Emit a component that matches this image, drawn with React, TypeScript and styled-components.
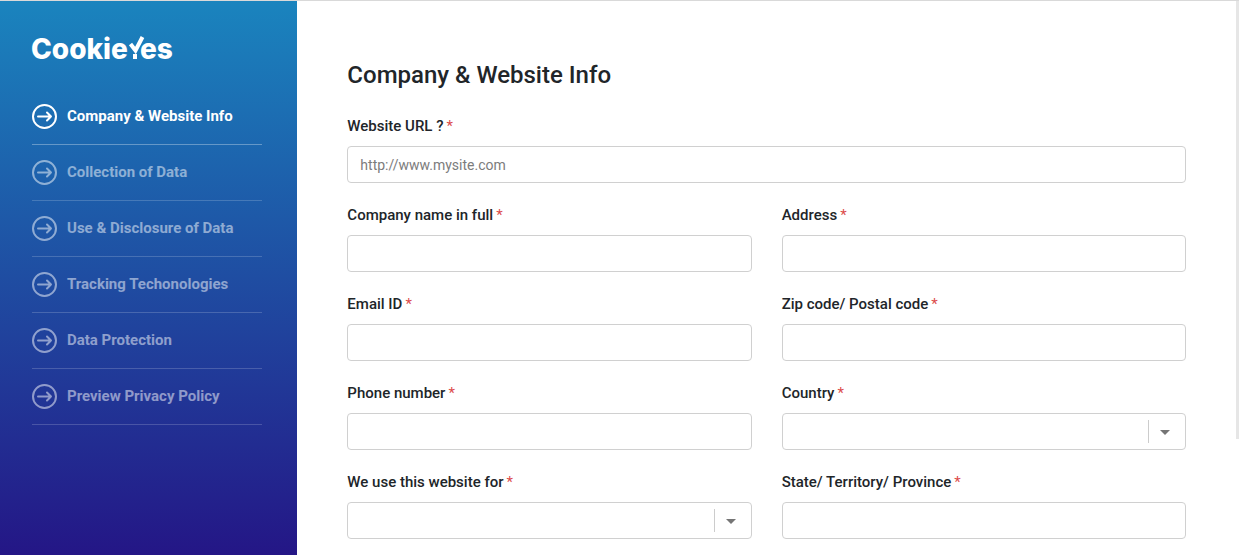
import React from "react";
import styled, { createGlobalStyle } from "styled-components";

const GlobalStyle = createGlobalStyle`
  *, *::before, *::after { box-sizing: border-box; }
  body {
    margin: 0;
    background: #fff;
    color: #212529;
    font-family: Roboto, "Liberation Sans", sans-serif;
    font-size: 15px;
    line-height: 24px;
  }
`;

const Page = styled.div`
  position: relative;
  display: flex;
  height: 100vh;
  overflow: hidden;
  border-top: 1px solid #d9d9d9;
`;

const Sidebar = styled.aside`
  flex: 0 0 24%;
  padding: 28px 35px 0 32px;
  background: linear-gradient(#1a84be, #241686);
`;

const Logo = styled.svg`
  display: block;
  width: 152px;
  height: 38px;
  margin-left: -4px;
  overflow: visible;
  fill: #fff;
  font-family: Inter, sans-serif;
  font-size: 28px;
  font-weight: 800;
`;

const Steps = styled.ul`
  margin: 22px 0 0;
  padding: 0;
  list-style: none;
`;

const Step = styled.li<{ $active: boolean }>`
  padding: 15px 0;
  border-bottom: 1px solid rgba(255, 255, 255, ${(p) => (p.$active ? 0.32 : 0.18)});
`;

const StepLink = styled.a<{ $active: boolean }>`
  display: flex;
  align-items: flex-start;
  gap: 10px;
  height: 25px;
  color: ${(p) => (p.$active ? "#fff" : "rgba(255, 255, 255, 0.5)")};
  font-weight: 700;
  text-decoration: none;
  white-space: nowrap;
`;

const StepIcon = styled.svg`
  flex: none;
  width: 25px;
  height: 25px;
  fill: none;
  stroke: currentColor;
  stroke-width: 2;
  stroke-linecap: round;
  stroke-linejoin: round;
`;

const Main = styled.main`
  flex: 1;
  min-width: 0;
  padding: 60px 53px 30px 50px;
  overflow: hidden;
`;

const Title = styled.h1`
  margin: 0 0 25px;
  font-size: 24px;
  font-weight: 500;
  line-height: 28px;
`;

const Form = styled.form`
  display: grid;
  grid-template-columns: 1fr 1fr;
  gap: 20px 30px;
`;

const FieldBox = styled.div<{ $wide: boolean }>`
  display: flex;
  flex-direction: column;
  gap: 8px;
  grid-column: ${(p) => (p.$wide ? "1 / -1" : "auto")};
`;

const Label = styled.label`
  font-weight: 500;
`;

const Required = styled.span`
  margin-left: 3px;
  color: #dc4c4c;
  font-weight: 400;
`;

const TextInput = styled.input`
  width: 100%;
  height: 37px;
  padding: 6px 12px;
  border: 1px solid #d0d0d0;
  border-radius: 4px;
  background: #fff;
  color: inherit;
  font: inherit;
  font-size: 14px;

  &::placeholder {
    color: #7c7c7c;
    opacity: 1;
  }
`;

const SelectBox = styled.div`
  position: relative;

  &::after {
    content: "";
    position: absolute;
    top: 17px;
    right: 16px;
    border: 5px solid transparent;
    border-top-color: #757575;
    border-bottom: 0;
    pointer-events: none;
  }

  &::before {
    content: "";
    position: absolute;
    top: 7px;
    bottom: 7px;
    right: 37px;
    width: 1px;
    background: #ccc;
    pointer-events: none;
  }
`;

const SelectInput = styled(TextInput).attrs({ as: "select" })`
  display: block;
  padding-right: 44px;
  appearance: none;
`;

const ScrollThumb = styled.div`
  position: absolute;
  top: 0;
  right: 0;
  width: 3px;
  height: 79%;
  background: #e6e6e6;
`;

const steps = [
  "Company & Website Info",
  "Collection of Data",
  "Use & Disclosure of Data",
  "Tracking Techonologies",
  "Data Protection",
  "Preview Privacy Policy",
];

type FieldSpec = {
  id: string;
  label: string;
  placeholder?: string;
  wide?: boolean;
  select?: boolean;
};

const fields: FieldSpec[] = [
  { id: "url", label: "Website URL ?", placeholder: "http://www.mysite.com", wide: true },
  { id: "company", label: "Company name in full" },
  { id: "address", label: "Address" },
  { id: "email", label: "Email ID" },
  { id: "zip", label: "Zip code/ Postal code" },
  { id: "phone", label: "Phone number" },
  { id: "country", label: "Country", select: true },
  { id: "purpose", label: "We use this website for", select: true },
  { id: "state", label: "State/ Territory/ Province" },
];

function Field({ id, label, placeholder, wide = false, select = false }: FieldSpec) {
  return (
    <FieldBox $wide={wide}>
      <Label htmlFor={id}>
        {label}
        <Required>*</Required>
      </Label>
      {select ? (
        <SelectBox>
          <SelectInput id={id} />
        </SelectBox>
      ) : (
        <TextInput id={id} type="text" placeholder={placeholder} />
      )}
    </FieldBox>
  );
}

export default function App() {
  return (
    <Page>
      <GlobalStyle />
      <Sidebar>
        <Logo viewBox="0 0 152 38" role="img" aria-label="CookieYes">
          <text x="3" y="30">Cookie</text>
          {/* check mark that stands for the Y */}
          <path
            d="M102.5 15 L107.5 21.5 L114.5 8"
            fill="none"
            stroke="#fff"
            strokeWidth="4"
          />
          <rect x="105" y="25" width="4" height="5" />
          <text x="112" y="30">es</text>
        </Logo>
        <nav>
          <Steps>
            {steps.map((name, i) => (
              <Step key={name} $active={i === 0}>
                <StepLink href="#" $active={i === 0}>
                  <StepIcon viewBox="0 0 25 25" aria-hidden="true">
                    <circle cx="12.5" cy="12.5" r="11.5" />
                    <path d="M6 12.5 H19 M15 8.5 L19 12.5 L15 16.5" />
                  </StepIcon>
                  {name}
                </StepLink>
              </Step>
            ))}
          </Steps>
        </nav>
      </Sidebar>
      <Main>
        <Title>Company &amp; Website Info</Title>
        <Form>
          {fields.map((field) => (
            <Field key={field.id} {...field} />
          ))}
        </Form>
      </Main>
      <ScrollThumb />
    </Page>
  );
}
